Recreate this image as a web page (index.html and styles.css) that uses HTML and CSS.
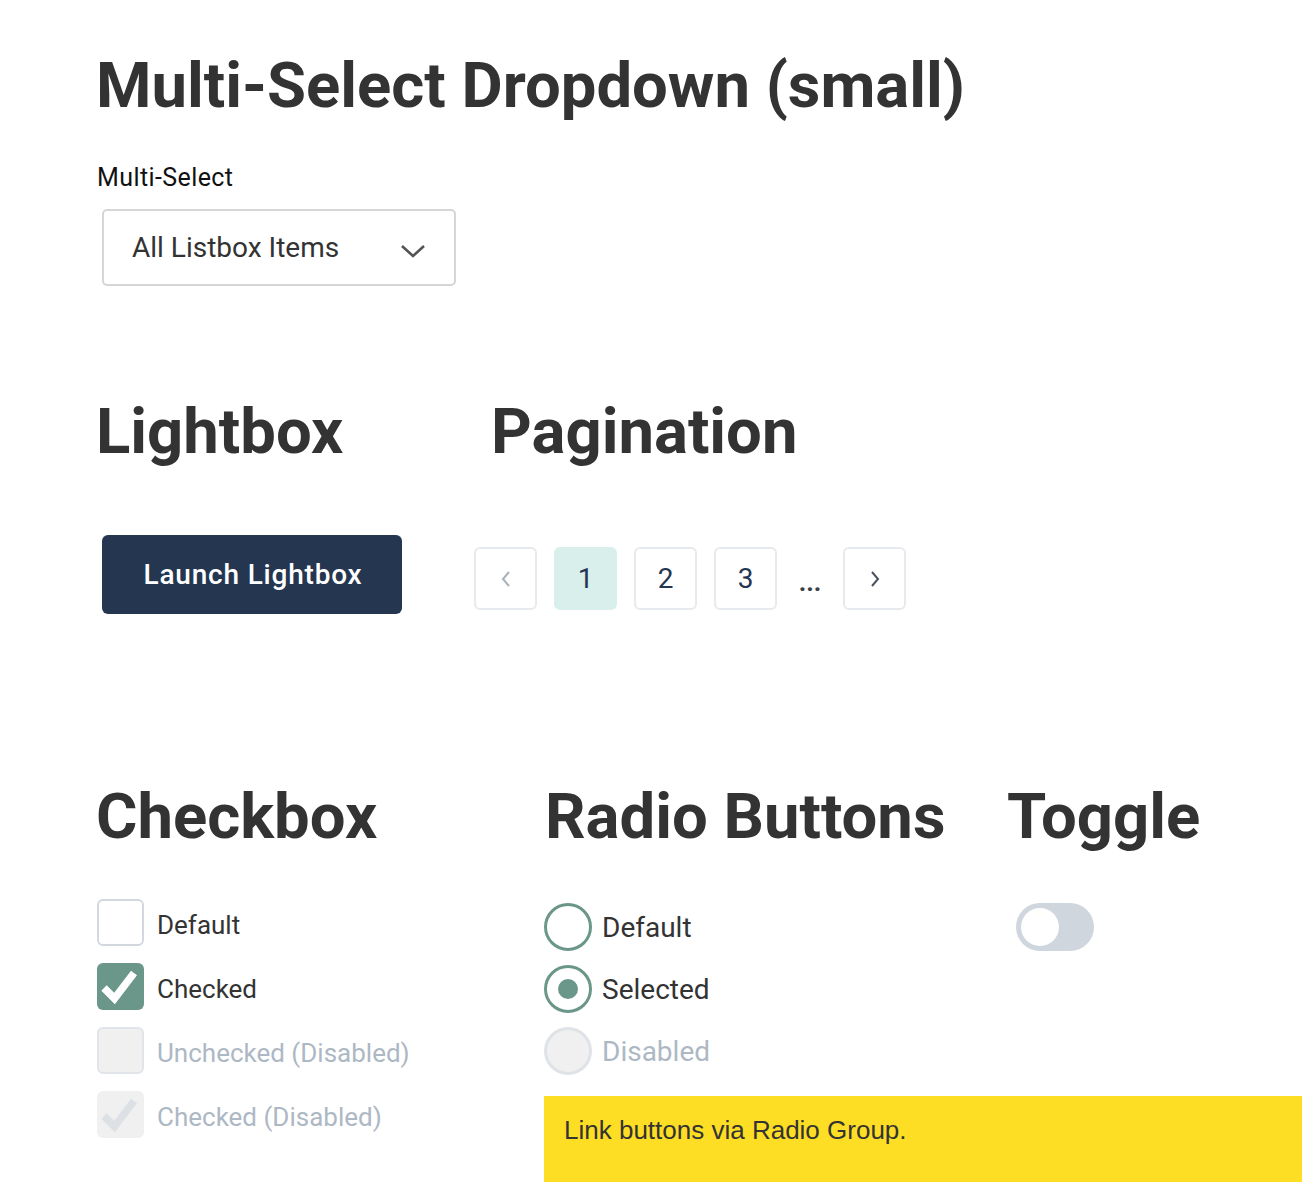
FILE: index.html
```html
<!DOCTYPE html>
<html lang="en">

<head>
    <meta charset="UTF-8">
    <meta name="viewport" content="width=device-width, initial-scale=1.0">
    <title>Form Components</title>
    <link rel="stylesheet" href="styles.css">
</head>

<body>

    <main class="page">

        <section class="block-select">
            <h1 class="title">Multi-Select Dropdown (small)</h1>
            <label class="field-label" for="multiSelect">Multi-Select</label>
            <div class="select" id="multiSelect">
                <span>All Listbox Items</span>
                <svg class="select-caret" width="26" height="14" viewBox="0 0 26 14">
                    <path d="M2 2 L13 12 L24 2" fill="none" stroke="#555" stroke-width="2.6" />
                </svg>
            </div>
        </section>

        <div class="row-top">
            <section class="col-lightbox">
                <h2 class="title">Lightbox</h2>
                <button class="btn-primary">Launch Lightbox</button>
            </section>

            <section class="col-pagination">
                <h2 class="title">Pagination</h2>
                <nav class="pagination">
                    <a class="page-item">
                        <svg width="10" height="16" viewBox="0 0 10 16">
                            <path d="M8 1 L2 8 L8 15" fill="none" stroke="#a9b2ba" stroke-width="2" />
                        </svg>
                    </a>
                    <a class="page-item active">1</a>
                    <a class="page-item">2</a>
                    <a class="page-item">3</a>
                    <span class="page-dots">...</span>
                    <a class="page-item">
                        <svg width="10" height="16" viewBox="0 0 10 16">
                            <path d="M2 1 L8 8 L2 15" fill="none" stroke="#4a5260" stroke-width="2" />
                        </svg>
                    </a>
                </nav>
            </section>
        </div>

        <div class="row-bottom">
            <section class="col-checkbox">
                <h2 class="title">Checkbox</h2>
                <ul class="choice-list checks">
                    <li class="choice">
                        <span class="box"></span>
                        <span class="choice-label">Default</span>
                    </li>
                    <li class="choice">
                        <span class="box checked">
                            <svg width="46" height="46" viewBox="0 0 46 46">
                                <path d="M7 25 L17.5 35.5 L37 10" fill="none" stroke="#fff" stroke-width="7.5" />
                            </svg>
                        </span>
                        <span class="choice-label">Checked</span>
                    </li>
                    <li class="choice disabled">
                        <span class="box"></span>
                        <span class="choice-label">Unchecked (Disabled)</span>
                    </li>
                    <li class="choice disabled">
                        <span class="box checked">
                            <svg width="46" height="46" viewBox="0 0 46 46">
                                <path d="M7 25 L17.5 35.5 L37 10" fill="none" stroke="#dde1e5" stroke-width="7.5" />
                            </svg>
                        </span>
                        <span class="choice-label">Checked (Disabled)</span>
                    </li>
                </ul>
            </section>

            <section class="col-radio">
                <h2 class="title">Radio Buttons</h2>
                <ul class="choice-list radios">
                    <li class="choice">
                        <span class="dot"></span>
                        <span class="choice-label">Default</span>
                    </li>
                    <li class="choice">
                        <span class="dot selected"></span>
                        <span class="choice-label">Selected</span>
                    </li>
                    <li class="choice disabled">
                        <span class="dot"></span>
                        <span class="choice-label">Disabled</span>
                    </li>
                </ul>
                <div class="note">Link buttons via Radio Group.</div>
            </section>

            <section class="col-toggle">
                <h2 class="title">Toggle</h2>
                <span class="toggle"><span class="knob"></span></span>
            </section>
        </div>

    </main>

</body>

</html>
```

FILE: styles.css
```css
body {
    margin: 0;
    font-family: "Roboto", "Liberation Sans", sans-serif;
    color: #333;
    background-color: #fff;
    overflow: hidden;
}

.page {
    padding: 47px 0 0 96px;
}

.title {
    margin: 0;
    font-size: 63.4px;
    font-weight: 700;
    line-height: 77px;
    color: #333;
}

/* multi-select */

.field-label {
    display: block;
    margin: 40px 0 0 1px;
    font-size: 25px;
    letter-spacing: 0.4px;
    line-height: 28px;
    color: #111;
}

.select {
    display: flex;
    align-items: center;
    justify-content: space-between;
    box-sizing: border-box;
    width: 354px;
    height: 77px;
    margin: 17px 0 0 6px;
    padding: 0 28px 0 28px;
    border: 2px solid #d6d6d6;
    border-radius: 5px;
    font-size: 28px;
}

.select-caret {
    margin-top: 6px;
}

/* lightbox + pagination */

.row-top {
    display: grid;
    grid-template-columns: 378px 1fr;
    margin-top: 107px;
}

.btn-primary {
    display: block;
    width: 300px;
    height: 79px;
    margin: 65px 0 0 6px;
    padding: 0 0 0 2px;
    border: none;
    border-radius: 6px;
    background-color: #253651;
    color: #fff;
    font-family: inherit;
    font-size: 28px;
    font-weight: 500;
    letter-spacing: 0.8px;
    cursor: pointer;
}

.col-pagination .title {
    padding-left: 17px;
}

.pagination {
    display: flex;
    align-items: center;
    gap: 17px;
    margin-top: 77px;
}

.page-item {
    display: flex;
    align-items: center;
    justify-content: center;
    box-sizing: border-box;
    width: 63px;
    height: 63px;
    border: 2px solid #e6eaef;
    border-radius: 6px;
    font-size: 28px;
    color: #253651;
}

.page-item.active {
    background-color: #d8efeb;
    border-color: #d8efeb;
}

.page-dots {
    width: 32px;
    padding-top: 6px;
    text-align: center;
    font-size: 26px;
    font-weight: 700;
    color: #3a3f47;
}

/* checkbox / radio / toggle */

.row-bottom {
    display: grid;
    grid-template-columns: 449px 462px 1fr;
    margin-top: 164px;
}

.choice-list {
    list-style: none;
    margin: 44px 0 0 0;
    padding: 0;
    display: flex;
    flex-direction: column;
    gap: 17px;
}

.choice {
    display: flex;
    align-items: center;
    gap: 13px;
    font-size: 26px;
    color: #333;
}

.choice.disabled {
    color: #adb8c4;
}

.checks {
    margin-left: 1px;
}

.checks .choice-label {
    padding-top: 4px;
}

.box {
    box-sizing: border-box;
    width: 47px;
    height: 47px;
    border: 2px solid #d3d8de;
    border-radius: 6px;
    background-color: #fff;
}

.box svg {
    display: block;
    margin: -1px 0 0 -1px;
}

.box.checked {
    border: none;
    background-color: #6b968a;
    padding: 1px;
}

.disabled .box {
    background-color: #f0f0f0;
    border-color: #e1e5e9;
}

.disabled .box.checked {
    background-color: #f0f0f0;
}

.radios {
    margin-top: 48px;
    margin-left: -1px;
    gap: 14px;
}

.radios .choice {
    gap: 10px;
    font-size: 28px;
}

.dot {
    box-sizing: border-box;
    width: 48px;
    height: 48px;
    border: 3.5px solid #6b968a;
    border-radius: 50%;
    background-color: #fff;
    display: flex;
    align-items: center;
    justify-content: center;
}

.dot.selected::after {
    content: "";
    width: 20px;
    height: 20px;
    border-radius: 50%;
    background-color: #6b968a;
}

.disabled .dot {
    background-color: #f0f0f0;
    border-color: #dfe3e8;
}

.note {
    box-sizing: border-box;
    width: 758px;
    margin: 21px 0 0 -1px;
    padding: 19px 20px 40px;
    background-color: #fede24;
    font-family: "Liberation Sans", Arial, sans-serif;
    font-size: 26px;
    color: #333;
}

.toggle {
    display: flex;
    align-items: center;
    box-sizing: border-box;
    width: 78px;
    height: 48px;
    margin: 48px 0 0 9px;
    padding: 0 5px;
    border-radius: 24px;
    background-color: #cfd6de;
}

.knob {
    width: 38px;
    height: 38px;
    border-radius: 50%;
    background-color: #fff;
}
```
